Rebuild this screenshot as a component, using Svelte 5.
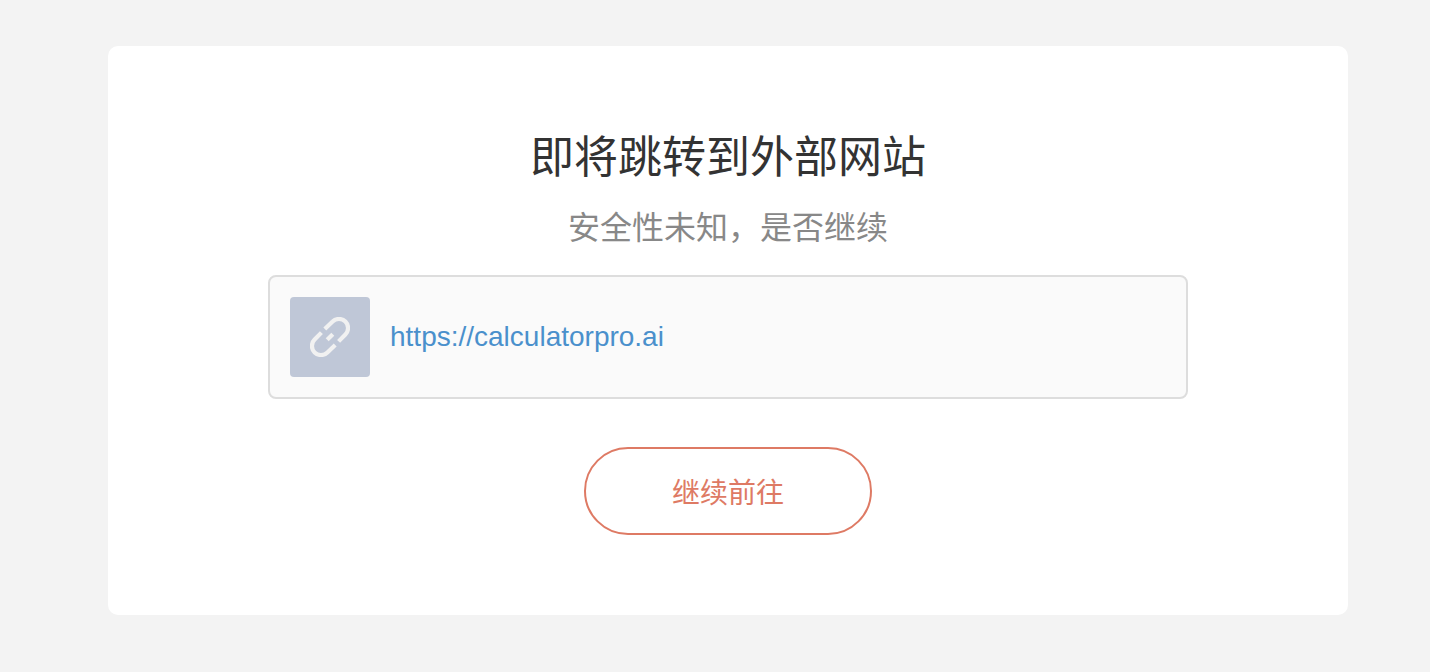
<script>
  const title = '即将跳转到外部网站';
  const subtitle = '安全性未知\uFF0C是否继续';
  const url = 'https://calculatorpro.ai';
  const action = '继续前往';
</script>

<main class="page" lang="zh-CN">
  <section class="card">
    <h1 class="title">{title}</h1>
    <p class="subtitle">{subtitle}</p>
    <div class="link-box">
      <div class="thumb">
        <svg width="40" height="40" viewBox="0 0 40 40" fill="none" stroke="#f1f1f1" stroke-width="4.2" aria-hidden="true">
          <path d="M14.8 12 L22.6 4.6 A9 9 0 0 1 35.4 17.4 L28.6 24.4" />
          <path d="M25.2 28 L17.4 35.4 A9 9 0 0 1 4.6 22.6 L11.4 15.6" />
          <path d="M17.2 22.8 L22.8 17.2" />
        </svg>
      </div>
      <a class="url" href={url}>{url}</a>
    </div>
    <button class="action" type="button">{action}</button>
  </section>
</main>

<style>
  :global(body) {
    margin: 0;
    background: #f3f3f3;
  }
  .page {
    box-sizing: border-box;
    height: 672px;
    padding: 46px 82px 57px 108px;
    font-family: "Liberation Sans", "Noto Sans CJK SC", sans-serif;
  }
  .card {
    box-sizing: border-box;
    width: 1240px;
    height: 569px;
    padding: 81px 160px 0;
    background: #fff;
    border-radius: 10px;
    display: flex;
    flex-direction: column;
    align-items: center;
  }
  .title {
    margin: 0;
    font-size: 44px;
    line-height: 62px;
    font-weight: 400;
    color: #333;
  }
  .subtitle {
    margin: 17px 0 0;
    font-size: 32px;
    line-height: 44px;
    color: #888;
  }
  .link-box {
    box-sizing: border-box;
    width: 920px;
    height: 124px;
    margin-top: 25px;
    padding: 20px;
    display: flex;
    align-items: center;
    gap: 20px;
    background: #fafafa;
    border: 2px solid #ddd;
    border-radius: 8px;
  }
  .thumb {
    width: 80px;
    height: 80px;
    flex: none;
    display: flex;
    align-items: center;
    justify-content: center;
    background: #bfc7d7;
    border-radius: 4px;
  }
  .url {
    font-size: 28px;
    color: #4a90cc;
    text-decoration: none;
  }
  .action {
    box-sizing: border-box;
    width: 288px;
    height: 88px;
    margin-top: 48px;
    background: #fff;
    border: 2px solid #de7a64;
    border-radius: 44px;
    font: inherit;
    font-size: 28px;
    color: #de7a64;
  }
</style>
